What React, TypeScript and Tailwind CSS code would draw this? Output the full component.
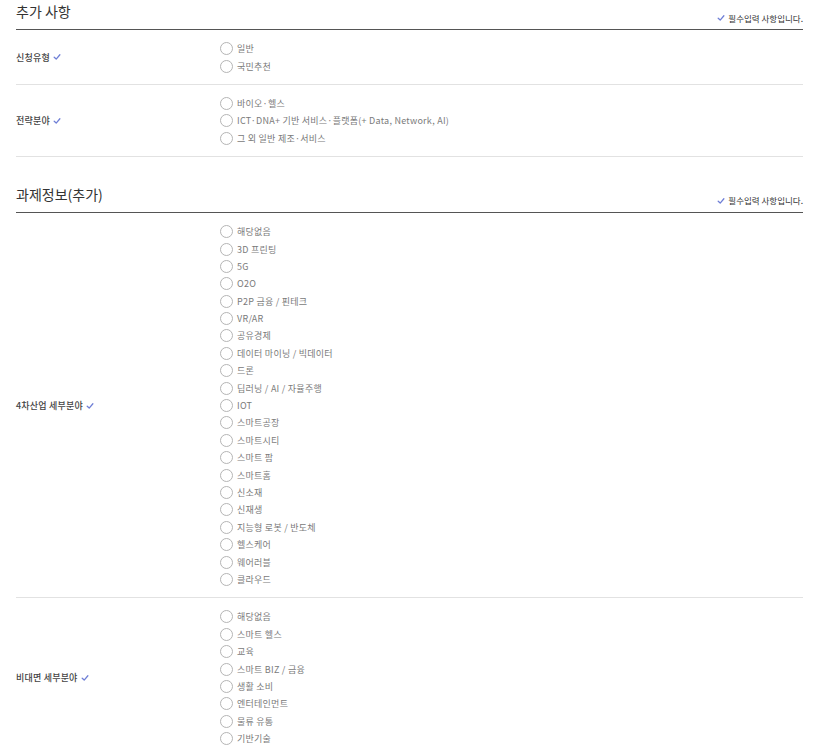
import React from "react";

const font = { fontFamily: '"Noto Sans CJK KR", "Noto Sans", sans-serif' };

function Check({ className = "" }: { className?: string }) {
    return (
        <svg viewBox="0 0 10 10" className={className} fill="none">
            <path d="M1.5 5.3 L4 7.6 L8.6 2.2" stroke="#6f7fd6" strokeWidth="1.6" strokeLinecap="round" strokeLinejoin="round" />
        </svg>
    );
}

function Radio({ label }: { label: string }) {
    return (
        <label className="flex items-center h-[17.4px] gap-[4px] cursor-pointer">
            <span className="w-[13px] h-[13px] rounded-full border border-[#b5b5b5] bg-white shrink-0" />
            <span className="text-[9px] text-[#7a7a7a] leading-none tracking-[0.25px]">{label}</span>
        </label>
    );
}

function Row({ label, options }: { label: string; options: string[] }) {
    return (
        <div className="flex border-b border-[#e2e2e2] pt-[10px] pb-[9px]">
            <div className="w-[204px] shrink-0 flex items-center gap-[3px] text-[9px] font-medium text-[#444] tracking-[0.2px]">
                {label}
                <Check className="w-[8px] h-[8px]" />
            </div>
            <div className="flex flex-col">
                {options.map((o) => (
                    <Radio key={o} label={o} />
                ))}
            </div>
        </div>
    );
}

function SectionHead({ title }: { title: string }) {
    return (
        <div className="flex items-end justify-between h-[30px] border-b border-[#555] pb-[7px]">
            <h2 className="text-[14px] text-[#333] leading-none -translate-y-[4px]">{title}</h2>
            <div className="flex items-center gap-[3px] text-[8.5px] text-[#333] leading-none">
                <Check className="w-[8px] h-[8px]" />
                필수입력 사항입니다.
            </div>
        </div>
    );
}

export default function App() {
    return (
        <div className="bg-white min-h-[754px] w-[816px] overflow-hidden" style={font}>
            <div className="ml-[16px] w-[787px]">
                <section>
                    <SectionHead title="추가 사항" />
                    <Row label="신청유형" options={["일반", "국민추천"]} />
                    <Row
                        label="전략분야"
                        options={[
                            "바이오·헬스",
                            "ICT·DNA+ 기반 서비스·플랫폼(+ Data, Network, AI)",
                            "그 외 일반 제조·서비스",
                        ]}
                    />
                </section>
                <section className="mt-[26px]">
                    <SectionHead title="과제정보(추가)" />
                    <Row
                        label="4차산업 세부분야"
                        options={[
                            "해당없음",
                            "3D 프린팅",
                            "5G",
                            "O2O",
                            "P2P 금융 / 핀테크",
                            "VR/AR",
                            "공유경제",
                            "데이터 마이닝 / 빅데이터",
                            "드론",
                            "딥러닝 / AI / 자율주행",
                            "IOT",
                            "스마트공장",
                            "스마트시티",
                            "스마트 팜",
                            "스마트홈",
                            "신소재",
                            "신재생",
                            "지능형 로봇 / 반도체",
                            "헬스케어",
                            "웨어러블",
                            "클라우드",
                        ]}
                    />
                    <Row
                        label="비대면 세부분야"
                        options={[
                            "해당없음",
                            "스마트 헬스",
                            "교육",
                            "스마트 BIZ / 금융",
                            "생활 소비",
                            "엔터테인먼트",
                            "물류 유통",
                            "기반기술",
                        ]}
                    />
                </section>
            </div>
        </div>
    );
}
